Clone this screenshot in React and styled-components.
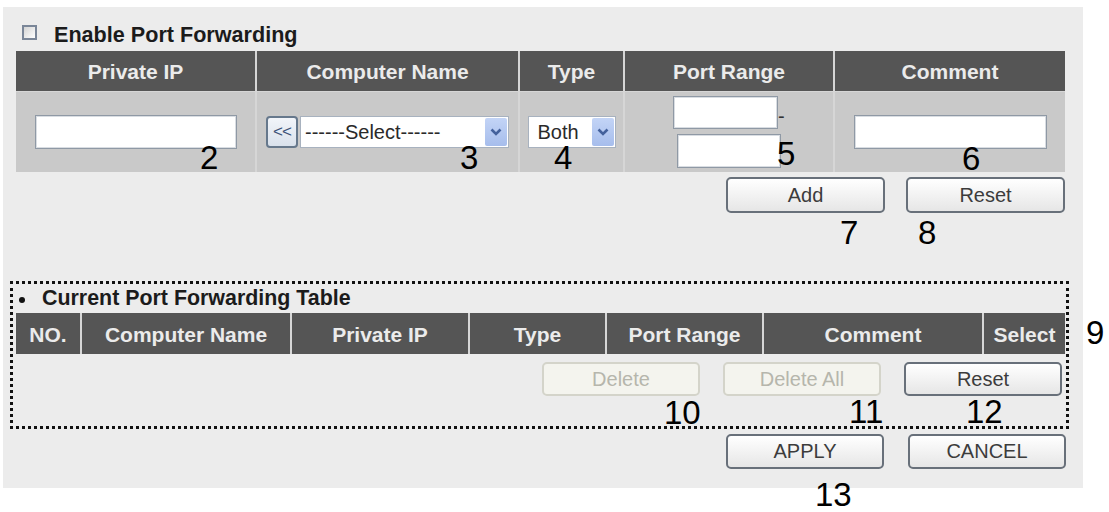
import React from 'react'
import styled, { createGlobalStyle } from 'styled-components'

const GlobalStyle = createGlobalStyle`
    html, body {
        margin: 0;
        padding: 0;
        background: #ffffff;
    }
    body {
        font-family: "Liberation Sans", Arial, sans-serif;
    }
`

const Page = styled.div`
    position: relative;
    width: 1109px;
    height: 512px;
    overflow: hidden;
`

const Panel = styled.div`
    margin: 7px 0 0 3px;
    width: 1080px;
    height: 481px;
    box-sizing: border-box;
    padding: 16px 0 0 7px;
    background: #ececec;
`

const CheckRow = styled.div`
    display: flex;
    align-items: flex-start;
    height: 28px;
    padding-left: 12px;
`

const CheckBox = styled.span`
    display: block;
    flex: 0 0 15px;
    width: 15px;
    height: 15px;
    margin-top: 2px;
    box-sizing: border-box;
    border: 2px solid #7a8698;
    background: linear-gradient(135deg, #d4d4d4, #ffffff);
`

const CheckLabel = styled.span`
    margin-left: 17px;
    font-size: 21.6px;
    font-weight: bold;
    line-height: 24px;
    color: #1b1b1b;
`

const Grid = styled.div`
    display: grid;
    grid-template-columns: ${(p) => p.$cols};
    column-gap: 2px;
    row-gap: 1px;
    width: 1049px;
    margin-left: ${(p) => p.$indent || 0}px;
    background: #d6d6d6;
`

const HeadCell = styled.div`
    height: ${(p) => p.$h}px;
    display: flex;
    align-items: center;
    justify-content: center;
    padding-top: 2px;
    box-sizing: border-box;
    background: #555555;
    color: #ebebeb;
    font-size: 21px;
    font-weight: bold;
    white-space: nowrap;
`

const DataCell = styled.div`
    height: 80px;
    display: flex;
    flex-direction: ${(p) => (p.$stack ? 'column' : 'row')};
    align-items: center;
    justify-content: center;
    gap: ${(p) => (p.$stack ? 5 : 2)}px;
    background: #c9c9c9;
`

const TextBox = styled.div`
    width: ${(p) => p.$w}px;
    height: ${(p) => p.$h || 34}px;
    box-sizing: border-box;
    background: #ffffff;
    border: 1px solid #8f99a5;
    box-shadow: inset 0 0 0 1px #d9dde2;
`

const RangeLine = styled.div`
    display: flex;
    align-items: flex-start;
`

const Dash = styled.span`
    width: 7px;
    margin-top: 10px;
    font-size: 20px;
    line-height: 20px;
    color: #333;
`

const PickButton = styled.div`
    width: 32px;
    height: 32px;
    box-sizing: border-box;
    display: flex;
    align-items: center;
    justify-content: center;
    border: 2px solid #66788c;
    border-radius: 4px;
    background: linear-gradient(#f2f5fa, #d9e1ec);
    color: #3d5279;
    font-size: 17px;
    letter-spacing: -1px;
`

const SelectBox = styled.div`
    width: ${(p) => p.$w}px;
    height: 32px;
    box-sizing: border-box;
    display: flex;
    align-items: center;
    justify-content: space-between;
    padding: 1px 1px 1px 0;
    background: #ffffff;
    border: 1px solid #a8b2bf;
    font-size: 20px;
    color: #2a2a2a;
`

const SelectText = styled.span`
    padding-left: ${(p) => p.$pad}px;
    white-space: nowrap;
`

const Arrow = styled.span`
    width: 22px;
    height: 28px;
    display: flex;
    align-items: center;
    justify-content: center;
    background: linear-gradient(#c3d4f6, #a6bdec);
    border-radius: 2px;
`

const ButtonRow = styled.div`
    display: flex;
    justify-content: flex-end;
    gap: ${(p) => p.$gap}px;
    width: ${(p) => p.$w}px;
    margin-top: ${(p) => p.$top}px;
    padding-right: ${(p) => p.$right}px;
    box-sizing: border-box;
`

const Button = styled.div`
    width: ${(p) => p.$w || 158}px;
    height: ${(p) => p.$h || 35}px;
    box-sizing: border-box;
    display: flex;
    align-items: center;
    justify-content: center;
    border-radius: 5px;
    font-size: 20px;
    border: 2px solid ${(p) => (p.$off ? '#d4d4ca' : '#68707a')};
    background: ${(p) =>
        p.$off ? '#f4f4ee' : 'linear-gradient(#ffffff, #e6e6e6)'};
    color: ${(p) => (p.$off ? '#b6b6ac' : '#3c3c3c')};
`

const Section = styled.div`
    width: 1059px;
    height: 148px;
    margin-top: 68px;
    box-sizing: border-box;
    border: 3px dotted #111111;
    padding-left: 3px;
`

const SectionTitle = styled.div`
    display: flex;
    align-items: center;
    height: 29px;
    font-size: 21.4px;
    font-weight: bold;
    color: #1b1b1b;
`

const Bullet = styled.span`
    display: block;
    flex: 0 0 6px;
    width: 6px;
    height: 6px;
    margin: 2px 17px 0 3px;
    border-radius: 50%;
    background: #111;
`

const Note = styled.span`
    position: absolute;
    left: ${(p) => p.$x - 2}px;
    top: ${(p) => p.$y - 1}px;
    font-size: 33px;
    line-height: 0.8;
    color: #000;
`

const Chevron = () => (
    <svg width="12" height="8" viewBox="0 0 12 8">
        <path d="M1.5 1.5 L6 6 L10.5 1.5" fill="none" stroke="#44619c" strokeWidth="2.6" />
    </svg>
)

const topCols = '239px 261px 103px 208px 230px'
const tableCols = '64px 208px 176px 135px 155px 218px 81px'

const notes = [
    ['2', 202, 146],
    ['3', 462, 146],
    ['4', 556, 146],
    ['5', 779, 142],
    ['6', 964, 147],
    ['7', 842, 221],
    ['8', 920, 221],
    ['9', 1088, 321],
    ['10', 666, 401],
    ['11', 851, 400],
    ['12', 968, 400],
    ['13', 817, 483],
]

const App = () => {
    return (
        <Page>
            <GlobalStyle />
            <Panel>
                <CheckRow>
                    <CheckBox />
                    <CheckLabel>Enable Port Forwarding</CheckLabel>
                </CheckRow>
                <Grid $cols={topCols} $indent={6}>
                    {['Private IP', 'Computer Name', 'Type', 'Port Range', 'Comment'].map((h) => (
                        <HeadCell key={h} $h={40}>{h}</HeadCell>
                    ))}
                    <DataCell>
                        <TextBox $w={202} />
                    </DataCell>
                    <DataCell>
                        <PickButton>&lt;&lt;</PickButton>
                        <SelectBox $w={209}>
                            <SelectText $pad={4}>------Select------</SelectText>
                            <Arrow><Chevron /></Arrow>
                        </SelectBox>
                    </DataCell>
                    <DataCell>
                        <SelectBox $w={88}>
                            <SelectText $pad={9}>Both</SelectText>
                            <Arrow><Chevron /></Arrow>
                        </SelectBox>
                    </DataCell>
                    <DataCell $stack>
                        <RangeLine>
                            <TextBox $w={105} $h={33} />
                            <Dash>-</Dash>
                        </RangeLine>
                        <TextBox $w={104} />
                    </DataCell>
                    <DataCell>
                        <TextBox $w={193} />
                    </DataCell>
                </Grid>
                <ButtonRow $gap={21} $w={1055} $top={5} $right={0}>
                    <Button $w={159} $h={36}>Add</Button>
                    <Button $w={159} $h={36}>Reset</Button>
                </ButtonRow>
                <Section>
                    <SectionTitle>
                        <Bullet />
                        Current Port Forwarding Table
                    </SectionTitle>
                    <Grid $cols={tableCols}>
                        {['NO.', 'Computer Name', 'Private IP', 'Type', 'Port Range', 'Comment', 'Select'].map((h) => (
                            <HeadCell key={h} $h={41}>{h}</HeadCell>
                        ))}
                    </Grid>
                    <ButtonRow $gap={23} $w={1049} $top={8} $right={3}>
                        <Button $off $h={34}>Delete</Button>
                        <Button $off $h={34}>Delete All</Button>
                        <Button $h={34}>Reset</Button>
                    </ButtonRow>
                </Section>
                <ButtonRow $gap={24} $w={1059} $top={5} $right={3}>
                    <Button>APPLY</Button>
                    <Button>CANCEL</Button>
                </ButtonRow>
            </Panel>
            {notes.map(([t, x, y]) => (
                <Note key={t} $x={x} $y={y}>{t}</Note>
            ))}
        </Page>
    )
}

export default App
